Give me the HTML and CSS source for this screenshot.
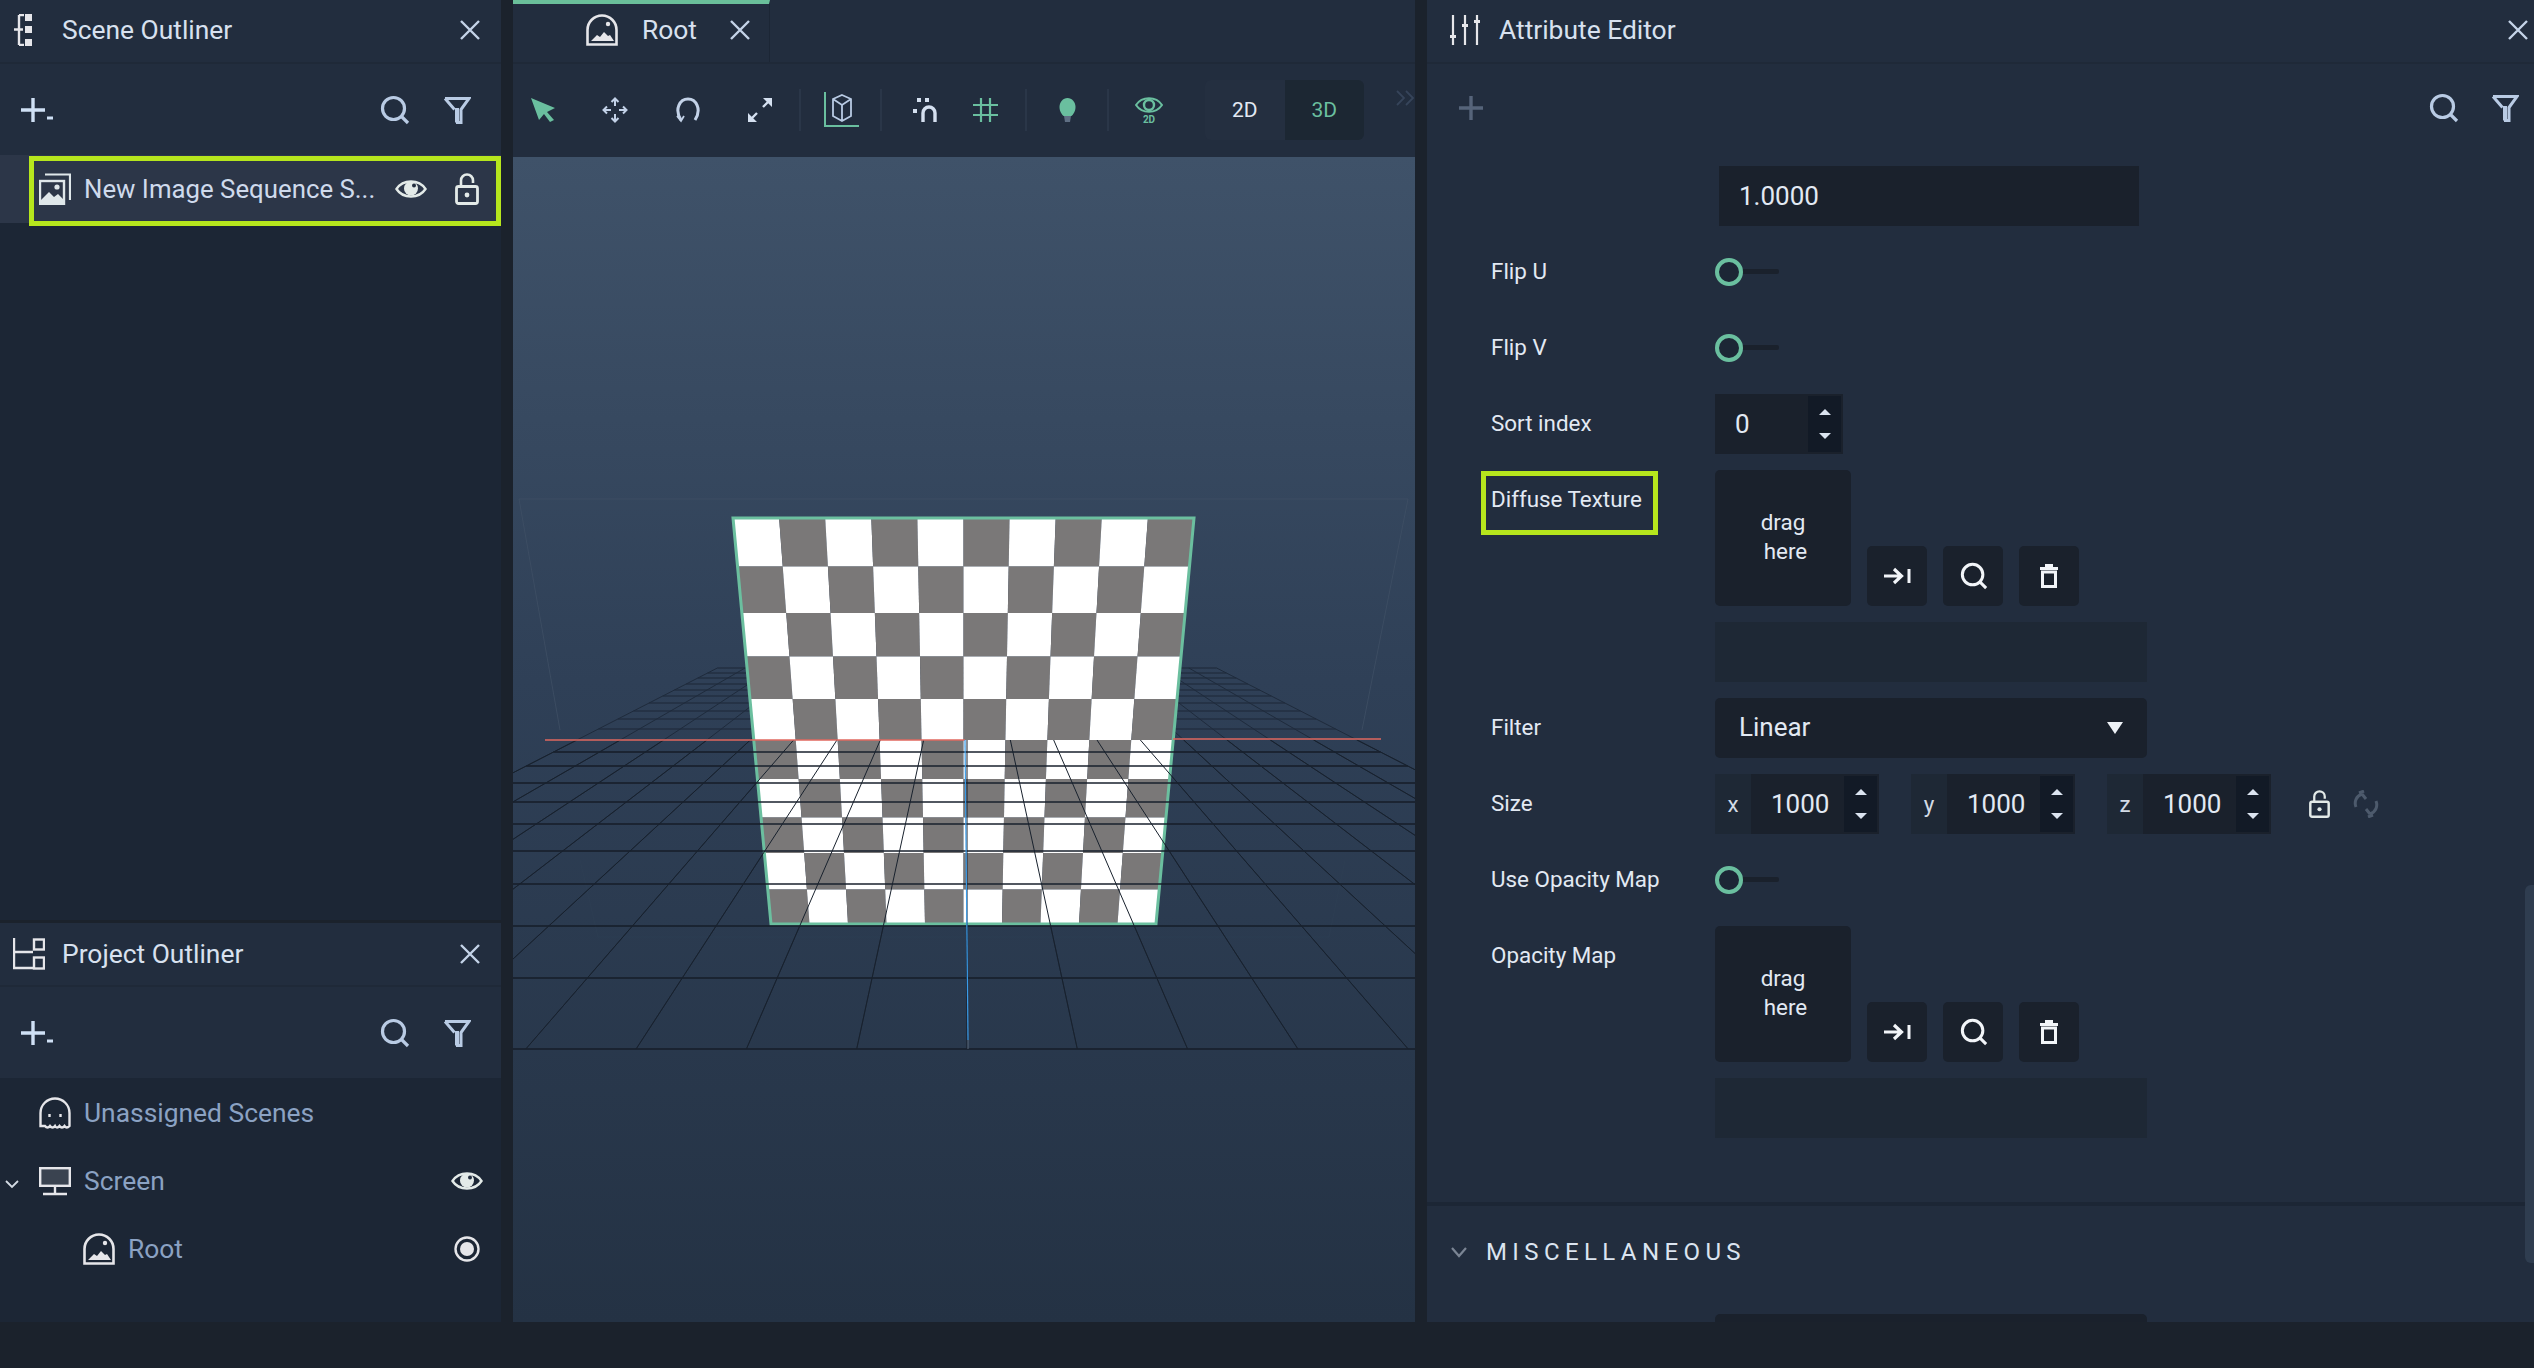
FILE: index.html
```html
<!DOCTYPE html>
<html lang="en">
<head>
    <meta charset="UTF-8">
    <title>Scene Editor</title>
    <link rel="stylesheet" href="styles.css">
</head>
<body>
    <svg class="defs" width="0" height="0">
        <symbol id="i-search" viewBox="0 0 30 30"><circle cx="13.500" cy="13.500" r="11" fill="none" stroke="currentColor" stroke-width="3.200"/><path d="M21 21l7 7" stroke="currentColor" stroke-width="3.200"/></symbol>
        <symbol id="i-filter" viewBox="0 0 28 28"><path d="M2 2.500h24l-8 11v13h-3.500v-13h-1v13M2 2.500l9.500 11" fill="none" stroke="currentColor" stroke-width="3"/></symbol>
        <symbol id="i-close" viewBox="0 0 20 20"><path d="M1 1l18 18M19 1L1 19" stroke="currentColor" stroke-width="2.400"/></symbol>
        <symbol id="i-add" viewBox="0 0 33 24"><path d="M12 0v24M0 12h24" stroke="currentColor" stroke-width="3.400"/><path d="M26 20h6" stroke="currentColor" stroke-width="3"/></symbol>
        <symbol id="i-eye" viewBox="0 0 32 22"><path d="M1.500 11C8 1 24 1 30.500 11 24 21 8 21 1.500 11z" fill="none" stroke="currentColor" stroke-width="2.400"/><circle cx="16" cy="10.500" r="7" fill="currentColor"/><circle cx="19" cy="7.500" r="2" fill="#222d3e"/></symbol>
        <symbol id="i-lock" viewBox="0 0 24 32"><path d="M6 14V7.500a6 6 0 0 1 12 0V10" fill="none" stroke="currentColor" stroke-width="2.600"/><rect x="1.500" y="13.500" width="21" height="17" rx="2" fill="none" stroke="currentColor" stroke-width="2.800"/><circle cx="12" cy="22" r="2.400" fill="currentColor"/></symbol>
        <symbol id="i-root" viewBox="0 0 32 32"><path d="M1.500 30.500V16a14.500 14.500 0 0 1 29 0v14.500z" fill="none" stroke="currentColor" stroke-width="2.600"/><path d="M5 27l6-6 3 2 4-5 4 4 2-1 4 6z" fill="currentColor"/><circle cx="22" cy="10" r="2.200" fill="currentColor"/></symbol>
        <symbol id="i-arrow-bar" viewBox="0 0 28 20"><path d="M1 10h17M11 3l7.500 7-7.500 7" fill="none" stroke="currentColor" stroke-width="3.200"/><path d="M26 3v14" stroke="currentColor" stroke-width="3"/></symbol>
        <symbol id="i-trash" viewBox="0 0 18 24"><path d="M0 4.500h18M5 1.500h8" stroke="currentColor" stroke-width="3"/><rect x="2.500" y="8" width="13" height="14.500" fill="none" stroke="currentColor" stroke-width="3"/></symbol>
    </svg>

    <div class="workspace">
        <div class="side">
            <section class="panel panel-scene">
                <header class="panel-head">
                    <svg class="head-icon" width="20" height="32" viewBox="0 0 20 32"><path d="M6 1v30M1 15.500h9M6 1h5M6 31h5" fill="none" stroke="#e6e6ea" stroke-width="2.400"/><path d="M12 0h7v7h-7zM12 12h7v7h-7zM12 25h7v7h-7z" fill="#e6e6ea"/></svg>
                    <span class="panel-title">Scene Outliner</span>
                    <svg class="close"><use href="#i-close"/></svg>
                </header>
                <div class="tools">
                    <svg class="add"><use href="#i-add"/></svg>
                    <svg class="search"><use href="#i-search"/></svg>
                    <svg class="filter"><use href="#i-filter"/></svg>
                </div>
                <div class="tree">
                    <div class="row row-selected">
                        <svg class="row-icon" width="32" height="32" viewBox="0 0 32 32"><path d="M6 1.500h25V27" fill="none" stroke="#dfe7ea" stroke-width="2.200"/><rect x="1" y="8" width="24" height="23" fill="none" stroke="#dfe7ea" stroke-width="2.400"/><path d="M2 27l8-8 5 5 4-3 5 5v5H2z" fill="#dfe7ea"/><circle cx="18" cy="14" r="2.600" fill="#dfe7ea"/></svg>
                        <span class="row-text row-text-seq">New Image Sequence S...</span>
                        <svg class="row-eye"><use href="#i-eye"/></svg>
                        <svg class="row-lock"><use href="#i-lock"/></svg>
                        <div class="mark mark-row"></div>
                    </div>
                </div>
            </section>

            <section class="panel panel-project">
                <header class="panel-head">
                    <svg class="head-icon head-icon-wide" width="32" height="32" viewBox="0 0 32 32"><path d="M1 0v30h19M1 14h19" fill="none" stroke="#e6e6ea" stroke-width="2.400"/><rect x="21" y="1.500" width="10" height="10" fill="none" stroke="#e6e6ea" stroke-width="2.400"/><rect x="21" y="19.500" width="10" height="11" fill="none" stroke="#e6e6ea" stroke-width="2.400"/></svg>
                    <span class="panel-title">Project Outliner</span>
                    <svg class="close"><use href="#i-close"/></svg>
                </header>
                <div class="tools">
                    <svg class="add"><use href="#i-add"/></svg>
                    <svg class="search"><use href="#i-search"/></svg>
                    <svg class="filter"><use href="#i-filter"/></svg>
                </div>
                <div class="tree">
                    <div class="row">
                        <svg class="row-icon" width="32" height="32" viewBox="0 0 32 32"><path d="M1.500 29V16a14.500 14.500 0 0 1 29 0v13c-2 2-3.500 2-5 0-1.500 2-3.500 2-5 0-1.500 2-3.500 2-4.500 0-1.500 2-3.500 2-5 0-1.500 2-3.500 2-5 0z" fill="none" stroke="#e6e6ea" stroke-width="2.400"/><path d="M10.500 17v3M21.500 17v3" stroke="#e6e6ea" stroke-width="2.400"/></svg>
                        <span class="row-text row-dim">Unassigned Scenes</span>
                    </div>
                    <div class="row">
                        <svg class="chevron" width="14" height="9" viewBox="0 0 14 9"><path d="M1 1l6 6 6-6" fill="none" stroke="#d4dbe4" stroke-width="1.800"/></svg>
                        <svg class="row-icon" width="32" height="28" viewBox="0 0 32 28"><rect x="1.200" y="1.200" width="29.600" height="17.600" fill="#3a4350" stroke="#e6e6ea" stroke-width="2.400"/><path d="M16 19v7M4 27h24" stroke="#e6e6ea" stroke-width="2.400"/></svg>
                        <span class="row-text row-dim">Screen</span>
                        <svg class="row-eye row-end"><use href="#i-eye"/></svg>
                    </div>
                    <div class="row row-child">
                        <svg class="row-icon"><use href="#i-root"/></svg>
                        <span class="row-text row-dim">Root</span>
                        <svg class="row-radio row-end" viewBox="0 0 26 26"><circle cx="13" cy="13" r="11.500" fill="none" stroke="#e6e6ea" stroke-width="2.400"/><circle cx="13" cy="13" r="7" fill="#e6e6ea"/></svg>
                    </div>
                </div>
            </section>
        </div>

        <main class="stage">
            <div class="tabbar">
                <div class="tab">
                    <svg class="tab-icon"><use href="#i-root"/></svg>
                    <span class="tab-text">Root</span>
                    <svg class="tab-close"><use href="#i-close"/></svg>
                </div>
            </div>
            <div class="stage-tools">
                <svg class="ti ti-pointer" viewBox="0 0 25 24"><path d="M0 0l24 10-8 4 7 8-4 2-6-8-5 6z" fill="#6abf9f"/></svg>
                <svg class="ti ti-move" viewBox="0 0 26 26"><path d="M13 2v7M13 17v7M2 13h7M17 13h7M9.500 5L13 1.500 16.500 5M9.500 21l3.500 3.500 3.500-3.500M5 9.500L1.500 13 5 16.500M21 9.500l3.500 3.500-3.500 3.500" fill="none" stroke="#c3d2e8" stroke-width="2"/></svg>
                <svg class="ti ti-rotate" viewBox="0 0 26 26"><path d="M6 23C-1 12 5 2 13 2s14 10 7 21" fill="none" stroke="#c3d2e8" stroke-width="3"/><path d="M2 19l4 5 3-5" fill="none" stroke="#c3d2e8" stroke-width="1.800"/></svg>
                <svg class="ti ti-scale" viewBox="0 0 26 26"><path d="M16 1h9v9zM1 16v9h9z" fill="#d5e0f0"/><path d="M21 5l-5 5M5 21l5-5" stroke="#d5e0f0" stroke-width="2.400"/></svg>
                <i class="sep sep-a"></i>
                <svg class="ti ti-box" viewBox="0 0 36 36"><path d="M2 0v34h34" fill="none" stroke="#6abf9f" stroke-width="2"/><path d="M19 3l9 4v17l-9 5-9-5V7zM10 7l9 6 9-6M19 13v16" fill="none" stroke="#b9cbe4" stroke-width="1.800"/></svg>
                <i class="sep sep-b"></i>
                <svg class="ti ti-magnet" viewBox="0 0 24 24"><path d="M4 0h4v4H4zM12 0h4v4h-4zM0 11h4v4H0z" fill="#d5e0f0"/><path d="M10 24V15a6 6 0 0 1 12 0v9" fill="none" stroke="#d5e0f0" stroke-width="3.400"/></svg>
                <svg class="ti ti-hash" viewBox="0 0 25 24"><path d="M8 0v24M17 0v24M0 7h25M0 17h25" stroke="#6abf9f" stroke-width="2.200"/></svg>
                <i class="sep sep-c"></i>
                <svg class="ti ti-bulb" viewBox="0 0 17 24"><path d="M8.500 0C13 0 16.500 4 16.500 9s-3 8-4 9h-8c-1-1-4-4-4-9S4 0 8.500 0z" fill="#6abf9f"/><path d="M5 18h7l-1 6H6z" fill="#5f6f84"/></svg>
                <i class="sep sep-d"></i>
                <svg class="ti ti-eye2d" viewBox="0 0 28 26"><path d="M1 8C7-1 21-1 27 8c-6 9-20 9-26 0z" fill="none" stroke="#6abf9f" stroke-width="2"/><circle cx="14" cy="8" r="5" fill="none" stroke="#6abf9f" stroke-width="2.400"/><text x="14" y="25.500" text-anchor="middle" class="ti-label">2D</text></svg>
                <div class="dim-switch">
                    <span class="dim dim-2d">2D</span>
                    <span class="dim dim-3d">3D</span>
                </div>
                <svg class="more" viewBox="0 0 19 16"><path d="M1 1l7 7-7 7M10 1l7 7-7 7" fill="none" stroke="#36445a" stroke-width="1.800"/></svg>
            </div>
            <div class="viewport">
                <svg id="scene" class="scene" viewBox="513 157 902 1165" width="902" height="1165"></svg>
            </div>
        </main>

        <section class="panel panel-attrs">
            <header class="panel-head">
                <svg class="head-icon head-icon-attr" width="30" height="30" viewBox="0 0 30 30"><path d="M3 0v30M15 0v30M27 0v30" stroke="#e6e6ea" stroke-width="2.200"/><path d="M0 20h6v3H0zM12 9h6v3h-6zM24 5h6v3h-6z" fill="#e6e6ea"/></svg>
                <span class="panel-title">Attribute Editor</span>
                <svg class="close close-attr"><use href="#i-close"/></svg>
            </header>
            <div class="tools tools-attr">
                <svg class="add-plain" viewBox="0 0 24 24"><path d="M12 0v24M0 12h24" stroke="#56647a" stroke-width="3.400"/></svg>
                <svg class="search"><use href="#i-search"/></svg>
                <svg class="filter"><use href="#i-filter"/></svg>
            </div>
            <div class="attrs">
                <div class="attr">
                    <span class="attr-label"></span>
                    <div class="field field-value">1.0000</div>
                </div>
                <div class="attr">
                    <span class="attr-label">Flip U</span>
                    <div class="toggle"></div>
                </div>
                <div class="attr">
                    <span class="attr-label">Flip V</span>
                    <div class="toggle"></div>
                </div>
                <div class="attr">
                    <span class="attr-label">Sort index</span>
                    <div class="stepper stepper-sort">
                        <span class="stepper-val">0</span>
                        <div class="spin"><i class="up"></i><i class="down"></i></div>
                    </div>
                </div>
                <div class="attr">
                    <span class="attr-label">Diffuse Texture<i class="mark mark-label"></i></span>
                    <div class="texture">
                        <div class="texture-top">
                            <div class="drop">drag<br><span class="drop-here">here</span></div>
                            <div class="btn"><svg class="btn-go"><use href="#i-arrow-bar"/></svg></div>
                            <div class="btn"><svg class="btn-search"><use href="#i-search"/></svg></div>
                            <div class="btn"><svg class="btn-trash"><use href="#i-trash"/></svg></div>
                        </div>
                        <div class="path"></div>
                    </div>
                </div>
                <div class="attr">
                    <span class="attr-label">Filter</span>
                    <div class="select">Linear<i class="select-arrow"></i></div>
                </div>
                <div class="attr">
                    <span class="attr-label">Size</span>
                    <div class="size">
                        <div class="axis">
                            <span class="axis-name">x</span>
                            <div class="stepper"><span class="stepper-val">1000</span><div class="spin"><i class="up"></i><i class="down"></i></div></div>
                        </div>
                        <div class="axis">
                            <span class="axis-name">y</span>
                            <div class="stepper"><span class="stepper-val">1000</span><div class="spin"><i class="up"></i><i class="down"></i></div></div>
                        </div>
                        <div class="axis">
                            <span class="axis-name">z</span>
                            <div class="stepper"><span class="stepper-val">1000</span><div class="spin"><i class="up"></i><i class="down"></i></div></div>
                        </div>
                        <svg class="size-lock"><use href="#i-lock"/></svg>
                        <svg class="size-link" viewBox="0 0 26 28"><path d="M9 4C3 6 1 12 3 17M6 3l5-2M17 24c6-2 8-8 6-13M20 25l-5 2M9 4l4 5M17 24l-4-5" fill="none" stroke="#4d5a6c" stroke-width="3"/></svg>
                    </div>
                </div>
                <div class="attr">
                    <span class="attr-label">Use Opacity Map</span>
                    <div class="toggle"></div>
                </div>
                <div class="attr">
                    <span class="attr-label">Opacity Map</span>
                    <div class="texture">
                        <div class="texture-top">
                            <div class="drop">drag<br><span class="drop-here">here</span></div>
                            <div class="btn"><svg class="btn-go"><use href="#i-arrow-bar"/></svg></div>
                            <div class="btn"><svg class="btn-search"><use href="#i-search"/></svg></div>
                            <div class="btn"><svg class="btn-trash"><use href="#i-trash"/></svg></div>
                        </div>
                        <div class="path"></div>
                    </div>
                </div>
                <div class="section-line"></div>
                <div class="section-head">
                    <svg width="16" height="11" viewBox="0 0 16 11"><path d="M1 1l7 8 7-8" fill="none" stroke="#7b8594" stroke-width="2.200"/></svg>
                    <span class="section-title">MISCELLANEOUS</span>
                </div>
                <div class="attr">
                    <span class="attr-label"></span>
                    <div class="select"></div>
                </div>
            </div>
            <div class="scrollbar"></div>
        </section>
    </div>
    <footer class="statusbar"></footer>
    <script src="viewport.js"></script>
</body>
</html>
```
FILE: styles.css
```css
* {
    box-sizing: border-box;
}
html, body {
    margin: 0;
    height: 100%;
}
body {
    background-color: #1b222c;
    color: #e2e9f3;
    font-family: Roboto, "Liberation Sans", sans-serif;
    overflow: hidden;
    display: flex;
    flex-direction: column;
    height: 1368px;
}
.defs {
    position: absolute;
}
.workspace {
    height: 1322px;
    display: grid;
    grid-template-columns: 501px 902px 1107px;
    column-gap: 12px;
}
.statusbar {
    flex: 1;
    background-color: #1b222c;
}

/* panels */
.side {
    display: flex;
    flex-direction: column;
    gap: 3px;
    min-height: 0;
}
.panel {
    display: flex;
    flex-direction: column;
    position: relative;
    min-height: 0;
    background-color: #222d3e;
}
.panel-scene {
    flex: 1;
}
.panel-project {
    height: 399px;
}
.panel-head {
    height: 62px;
    display: flex;
    align-items: center;
    flex: none;
    position: relative;
    padding-bottom: 2px;
}
.panel-project .panel-head {
    padding-bottom: 0;
}
.head-icon {
    margin-left: 13px;
    margin-right: 29px;
    flex: none;
}
.head-icon-wide {
    margin-right: 17px;
}
.head-icon-attr {
    margin-left: 23px;
    margin-right: 19px;
}
.panel-title {
    font-size: 26.4px;
    color: #d8e1ef;
}
.close {
    width: 20px;
    height: 20px;
    color: #c4d3e8;
    margin-left: auto;
    margin-right: 21px;
}
.close-attr {
    margin-right: 6px;
}
.tools {
    height: 93px;
    display: flex;
    align-items: center;
    flex: none;
    color: #b9cbe4;
    border-top: 2px solid #1f2938;
}
.add {
    width: 33px;
    height: 24px;
    margin-left: 21px;
    color: #cfe0f5;
    margin-right: auto;
}
.search {
    width: 30px;
    height: 30px;
    margin-right: 33px;
}
.filter {
    width: 28px;
    height: 28px;
    margin-right: 30px;
}
.tools-attr {
    height: 88px;
    padding-top: 2px;
}
.tools-attr .search {
    margin-right: 32px;
}
.tools-attr .filter {
    margin-right: 15px;
}
.add-plain {
    width: 24px;
    height: 24px;
    margin-left: 32px;
    margin-right: auto;
}
.tree {
    flex: 1;
    background-color: #1c2635;
    min-height: 0;
}
.panel-project .tree {
    padding-top: 1px;
}
.row {
    height: 68px;
    display: flex;
    align-items: center;
    padding-left: 39px;
    position: relative;
    font-size: 26.4px;
}
.row-selected {
    background-color: #2c3648;
    color: #cfdaec;
}
.row-icon {
    width: 32px;
    height: 32px;
    margin-right: 13px;
    flex: none;
    color: #e6e6ea;
}
.row-child {
    padding-left: 83px;
}
.row-dim {
    color: #8ba2c3;
}
.row-text {
    white-space: nowrap;
}
.row-text-seq {
    font-size: 25.8px;
}
.row-eye {
    width: 32px;
    height: 22px;
    color: #e3eae8;
    margin-left: 20px;
    flex: none;
}
.row-lock {
    width: 24px;
    height: 32px;
    color: #e3eae8;
    margin-left: 28px;
    flex: none;
}
.row-end {
    margin-left: auto;
    margin-right: 18px;
}
.row-radio {
    width: 26px;
    height: 26px;
    margin-right: 21px;
}
.chevron {
    position: absolute;
    left: 5px;
    top: 33px;
}
/* yellow-green annotation boxes sit over the content */
.mark {
    position: absolute;
    border: 5px solid #b6e61d;
    pointer-events: none;
}
.mark-row {
    left: 29px;
    top: 1px;
    right: 0;
    height: 70px;
}
.mark-label {
    left: -10px;
    top: 1px;
    width: 177px;
    height: 64px;
}

/* center stage */
.stage {
    display: flex;
    flex-direction: column;
    min-height: 0;
    background-color: #222d3e;
}
.tabbar {
    height: 62px;
    flex: none;
    display: flex;
}
.tab {
    width: 257px;
    border-top: 4px solid #6abf9a;
    border-right: 1px solid #1c2635;
    display: flex;
    align-items: center;
    padding-left: 72px;
    padding-bottom: 6px;
}
.tab-icon {
    width: 34px;
    height: 32px;
    color: #e6e6ea;
    margin-right: 23px;
}
.tab-text {
    font-size: 26.4px;
    color: #d8e1ef;
}
.tab-close {
    width: 22px;
    height: 20px;
    margin-left: 32px;
    color: #c4d3e8;
}
.stage-tools {
    height: 95px;
    flex: none;
    border-top: 2px solid #1f2938;
    display: flex;
    align-items: center;
    position: relative;
    padding-left: 18px;
    padding-bottom: 2px;
}
.ti {
    flex: none;
}
.ti-pointer {
    width: 25px;
    height: 24px;
}
.ti-move {
    width: 26px;
    height: 26px;
    margin-left: 46px;
}
.ti-rotate {
    width: 26px;
    height: 26px;
    margin-left: 47px;
}
.ti-scale {
    width: 26px;
    height: 26px;
    margin-left: 46px;
}
.sep {
    width: 2px;
    height: 42px;
    background-color: #2a3648;
    flex: none;
}
.sep-a {
    margin-left: 26px;
}
.ti-box {
    width: 36px;
    height: 36px;
    margin-left: 22px;
}
.sep-b {
    margin-left: 21px;
}
.ti-magnet {
    width: 24px;
    height: 24px;
    margin-left: 31px;
}
.ti-hash {
    width: 25px;
    height: 24px;
    margin-left: 36px;
}
.sep-c {
    margin-left: 27px;
}
.ti-bulb {
    width: 17px;
    height: 24px;
    margin-left: 32px;
}
.sep-d {
    margin-left: 31px;
}
.ti-eye2d {
    width: 28px;
    height: 26px;
    margin-left: 26px;
}
.ti-label {
    font-family: Roboto, sans-serif;
    font-size: 10px;
    font-weight: 700;
    fill: #6abf9f;
}
.dim-switch {
    display: flex;
    margin-left: 42px;
    height: 60px;
    border-radius: 6px;
    overflow: hidden;
    font-size: 21px;
}
.dim {
    width: 79.500px;
    display: flex;
    align-items: center;
    justify-content: center;
}
.dim-2d {
    background-color: #242f40;
    color: #e2e9f3;
}
.dim-3d {
    background-color: #1c2733;
    color: #6abf9f;
}
.more {
    width: 19px;
    height: 16px;
    position: absolute;
    right: 0;
    top: 26px;
}
.viewport {
    flex: 1;
    min-height: 0;
    background: linear-gradient(#3f5269 0%, #2f4057 45%, #243244 100%);
    overflow: hidden;
}
.scene {
    display: block;
}

/* attribute editor */
.attrs {
    flex: 1;
    min-height: 0;
    overflow: hidden;
    padding-top: 16px;
}
.attr {
    display: grid;
    grid-template-columns: 224px 1fr;
    padding-left: 64px;
    margin-bottom: 16px;
    min-height: 60px;
    font-size: 22.4px;
}
.attr-label {
    line-height: 59px;
    position: relative;
    color: #e2e9f3;
    white-space: nowrap;
}
.field {
    height: 60px;
    font-size: 26px;
    line-height: 60px;
}
.field-value {
    width: 420px;
    margin-left: 4px;
    padding-left: 20px;
    background-color: #1a212c;
}
.toggle {
    position: relative;
    height: 60px;
}
.toggle::before {
    content: "";
    position: absolute;
    left: 26px;
    top: 27px;
    width: 38px;
    height: 5px;
    background-color: #1a212c;
    border-radius: 2px;
}
.toggle::after {
    content: "";
    box-sizing: border-box;
    position: absolute;
    left: 0;
    top: 16px;
    width: 28px;
    height: 28px;
    border: 4px solid #6abf9f;
    border-radius: 50%;
    background-color: #1c2635;
}
.stepper {
    display: flex;
    align-items: center;
    height: 60px;
    width: 128px;
    background-color: #1a212c;
    position: relative;
    font-size: 26px;
}
.stepper-val {
    padding-left: 20px;
    padding-bottom: 1px;
}
.spin {
    position: absolute;
    right: 2px;
    top: 2px;
    bottom: 2px;
    width: 33px;
    background-color: #121a26;
    display: flex;
    flex-direction: column;
    justify-content: space-between;
    align-items: center;
    padding: 13px 0;
}
.up, .down {
    width: 0;
    height: 0;
    border-left: 6px solid transparent;
    border-right: 6px solid transparent;
}
.up {
    border-bottom: 6px solid #dbe4f0;
}
.down {
    border-top: 6px solid #dbe4f0;
}
.texture {
    width: 432px;
}
.texture-top {
    display: flex;
    align-items: flex-end;
    gap: 16px;
}
.drop {
    width: 136px;
    height: 136px;
    background-color: #1a212c;
    border-radius: 5px;
    text-align: center;
    line-height: 29px;
    padding-top: 38px;
}
.drop-here {
    padding-left: 5px;
}
.btn {
    width: 60px;
    height: 60px;
    background-color: #1a212c;
    border-radius: 5px;
    display: flex;
    align-items: center;
    justify-content: center;
    color: #f2f5f9;
}
.btn-go {
    width: 28px;
    height: 20px;
}
.btn-search {
    width: 28px;
    height: 28px;
    margin-left: 2px;
}
.btn-trash {
    width: 18px;
    height: 24px;
}
.path {
    height: 60px;
    margin-top: 16px;
    background-color: #1e2835;
}
.select {
    width: 432px;
    height: 60px;
    background-color: #1a212c;
    border-radius: 5px;
    font-size: 26px;
    line-height: 59px;
    padding-left: 24px;
    position: relative;
}
.select-arrow {
    position: absolute;
    right: 24px;
    top: 24px;
    border-left: 8px solid transparent;
    border-right: 8px solid transparent;
    border-top: 12px solid #eef2f7;
}
.size {
    display: flex;
    align-items: center;
    gap: 32px;
}
.axis {
    display: flex;
    align-items: center;
    height: 60px;
    background-color: #1e2835;
}
.axis-name {
    width: 36px;
    text-align: center;
    color: #d3dbe6;
}
.size-lock {
    width: 21px;
    height: 28px;
    color: #e3eae8;
    margin-left: 6px;
}
.size-link {
    width: 26px;
    height: 28px;
    margin-left: -9px;
}
.section-line {
    height: 4px;
    background-color: #1c2635;
    margin-top: 64px;
}
.section-head {
    height: 92px;
    display: flex;
    align-items: center;
    gap: 19px;
    padding-left: 24px;
    margin-bottom: 16px;
}
.section-title {
    font-size: 24px;
    letter-spacing: 5.400px;
    color: #dbe4f0;
}
.scrollbar {
    position: absolute;
    right: 0;
    top: 885px;
    width: 9px;
    height: 378px;
    background-color: #2f3d50;
    border-radius: 6px 0 0 6px;
}
```
FILE: viewport.js
```js
const svg = document.getElementById('scene');
const NS = 'http://www.w3.org/2000/svg';

function add(tag, attrs) {
    const el = document.createElementNS(NS, tag);
    for (const key in attrs) el.setAttribute(key, attrs[key]);
    svg.appendChild(el);
}

function line(x1, y1, x2, y2, stroke, width) {
    add('line', { x1, y1, x2, y2, stroke, 'stroke-width': width });
}

// floor grid, lines meet at a vanishing point above the horizon
const centerX = 967;
const vanishY = 540;
const slope = 0.2167;
const topY = 668;
const axisY = 740;
const bottomY = 1049;
const floorRows = [668, 673, 678, 684, 690, 696, 703, 711, 719, 729, 752, 766, 783, 802, 824, 851, 884, 926, 978, 1049];

function floorX(n, y) {
    return centerX + n * slope * (y - vanishY);
}

function radials(fromY, color) {
    for (let n = -9; n <= 9; n++) {
        line(floorX(n, fromY), fromY, floorX(n, bottomY), bottomY, color, 1);
    }
}

function rows(list, color, width) {
    list.forEach(function (y) {
        line(floorX(-9, y), y, floorX(9, y), y, color, width);
    });
}

rows(floorRows, '#1c2736', 1);
radials(topY, '#1f2b3c');

// faint camera box
const box = '#3f4f65';
line(519, 499, 1408, 499, box, 0.8);
line(519, 499, 560, 730, box, 0.8);
line(1408, 499, 1362, 730, box, 0.8);
const lowBox = '#30405480';
line(598, 937, 1329, 937, lowBox, 0.8);
line(598, 937, 580, 860, lowBox, 0.8);
line(1329, 937, 1345, 860, lowBox, 0.8);

// checker plane, rows get shorter going down
const rowY = [518, 566.5, 613, 656.5, 699, 740, 779, 817.5, 853, 889.5, 924];

function planeX(col, y) {
    const t = (y - 518) / 406;
    const left = 733 + 38 * t;
    const right = 1194 - 38 * t;
    return left + (right - left) * col / 10;
}

for (let r = 0; r < 10; r++) {
    for (let c = 0; c < 10; c++) {
        const y1 = rowY[r];
        const y2 = rowY[r + 1];
        const points = [
            planeX(c, y1) + ',' + y1,
            planeX(c + 1, y1) + ',' + y1,
            planeX(c + 1, y2) + ',' + y2,
            planeX(c, y2) + ',' + y2
        ].join(' ');
        add('polygon', { points, fill: (r + c) % 2 === 0 ? '#ffffff' : '#7a7878' });
    }
}
add('polygon', { points: '733,518 1194,518 1156,924 771,924', fill: 'none', stroke: '#6bbf9f', 'stroke-width': 3 });

// the part of the floor in front of the plane
rows(floorRows.filter(function (y) { return y > axisY; }), '#18212d', 1.4);
radials(axisY, '#18212d');

// axes
line(545, 740, 965, 740, '#e0695f', 1.5);
line(1173, 739, 1381, 739, '#e0695f', 1.5);
line(965, 740, 968, 1040, '#3a9be8', 1.2);
line(968, 1040, 968, 1049, '#5d6b7d', 1);
```
